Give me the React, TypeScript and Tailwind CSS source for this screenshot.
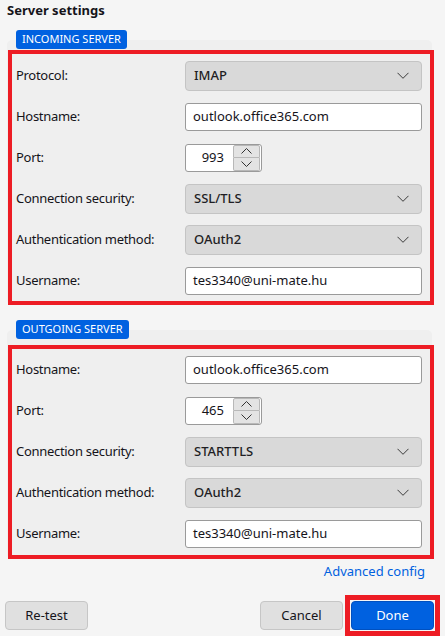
import React from "react";

const font = { fontFamily: '"Segoe UI", "Noto Sans", "Open Sans", sans-serif' };

function Chevron() {
  return (
    <svg width="12" height="7" viewBox="0 0 12 7" fill="none" className="text-[#3a3a3a]">
      <path d="M0.5 0.8l5.5 5.5 5.5-5.5" stroke="currentColor" strokeWidth="1" />
    </svg>
  );
}

function SelectBox({ value }: { value: string }) {
  return (
    <div className="w-[237px] h-[30px] flex items-center justify-between pl-[8px] pr-[12px] bg-[#d9d9d9] border border-[#c4c4c4] rounded-[4px] text-[13px] font-medium text-[#1f1e24]">
      <span>{value}</span>
      <Chevron />
    </div>
  );
}

function TextBox({ value }: { value: string }) {
  return (
    <div className="w-[237px] h-[28px] flex items-center pl-[7px] bg-white border border-[#9a9a9a] rounded-[3px] text-[13px] text-[#15141a]">
      {value}
    </div>
  );
}

function PortBox({ value }: { value: string }) {
  return (
    <div className="w-[77px] h-[28px] flex items-center bg-white border border-[#9a9a9a] rounded-[3px] text-[13px] text-[#15141a]">
      <span className="w-[38px] text-right">{value}</span>
      <div className="ml-auto mr-[1px] w-[27px] h-[26px] flex flex-col">
        <div className="flex-1 flex items-center justify-center bg-[#e3e3e3] border border-[#b8b8b8] rounded-t-[2px]">
          <svg width="11" height="6" viewBox="0 0 11 6" fill="none">
            <path d="M0.5 5.5l5-5 5 5" stroke="#333" strokeWidth="1" />
          </svg>
        </div>
        <div className="flex-1 flex items-center justify-center bg-[#e3e3e3] border border-t-0 border-[#b8b8b8] rounded-b-[2px]">
          <svg width="11" height="6" viewBox="0 0 11 6" fill="none">
            <path d="M0.5 0.5l5 5 5-5" stroke="#333" strokeWidth="1" />
          </svg>
        </div>
      </div>
    </div>
  );
}

function Row({ label, children }: { label: string; children: React.ReactNode }) {
  return (
    <div className="h-[41px] flex items-center">
      <span className="w-[173px] pl-[4px] text-[13px] tracking-[-0.3px] text-[#15141a]">{label}</span>
      {children}
    </div>
  );
}

function Badge({ text }: { text: string }) {
  return (
    <div className="relative z-10 ml-[16px] self-start h-[19px] px-[6px] flex items-center rounded-[3px] bg-[#0061e0] text-white text-[11px]">
      {text}
    </div>
  );
}

export default function App() {
  return (
    <div className="w-[445px] h-[636px] bg-[#f5f5f5] overflow-hidden flex flex-col" style={font}>
      <div className="pl-[7px] pt-[1px] h-[30px] text-[13px] font-bold text-[#15141a]">Server settings</div>

      <div className="flex flex-col">
        <Badge text="INCOMING SERVER" />
        <div className="mt-[-9px] ml-[7px] w-[425px] bg-[#efefef] rounded-[5px] pt-[10px]">
          <div className="ml-[1px] w-[426px] border-4 border-[#ed1c24] pt-[1px]">
            <Row label="Protocol:"><SelectBox value="IMAP" /></Row>
            <Row label="Hostname:"><TextBox value="outlook.office365.com" /></Row>
            <Row label="Port:"><PortBox value="993" /></Row>
            <Row label="Connection security:"><SelectBox value="SSL/TLS" /></Row>
            <Row label="Authentication method:"><SelectBox value="OAuth2" /></Row>
            <Row label="Username:"><TextBox value="tes3340@uni-mate.hu" /></Row>
          </div>
        </div>
      </div>

      <div className="flex flex-col mt-[15px]">
        <Badge text="OUTGOING SERVER" />
        <div className="mt-[-9px] ml-[7px] w-[425px] bg-[#efefef] rounded-[5px] pt-[15px]">
          <div className="ml-[1px] w-[426px] border-4 border-[#ed1c24] pb-[1px]">
            <Row label="Hostname:"><TextBox value="outlook.office365.com" /></Row>
            <Row label="Port:"><PortBox value="465" /></Row>
            <Row label="Connection security:"><SelectBox value="STARTTLS" /></Row>
            <Row label="Authentication method:"><SelectBox value="OAuth2" /></Row>
            <Row label="Username:"><TextBox value="tes3340@uni-mate.hu" /></Row>
          </div>
        </div>
      </div>

      <div className="flex justify-end pr-[20px] mt-[3px] h-[20px] items-center">
        <span className="text-[13px] text-[#0061e0]">Advanced config</span>
      </div>

      <div className="mt-auto mb-[6px] flex items-center px-[5px]">
        <button className="w-[83px] h-[29px] bg-[#e0e0e0] border border-[#c6c6c6] rounded-[4px] text-[13px] text-[#15141a]">
          Re-test
        </button>
        <button className="ml-auto w-[83px] h-[29px] bg-[#e0e0e0] border border-[#c6c6c6] rounded-[4px] text-[13px] text-[#15141a]">
          Cancel
        </button>
        <div className="ml-[2px] -my-[7px] border-[5px] border-[#ed1c24] p-[1px]">
          <button className="w-[83px] h-[29px] bg-[#0061e0] border border-[#0050c0] rounded-[4px] text-[13px] text-white">
            Done
          </button>
        </div>
      </div>
    </div>
  );
}
